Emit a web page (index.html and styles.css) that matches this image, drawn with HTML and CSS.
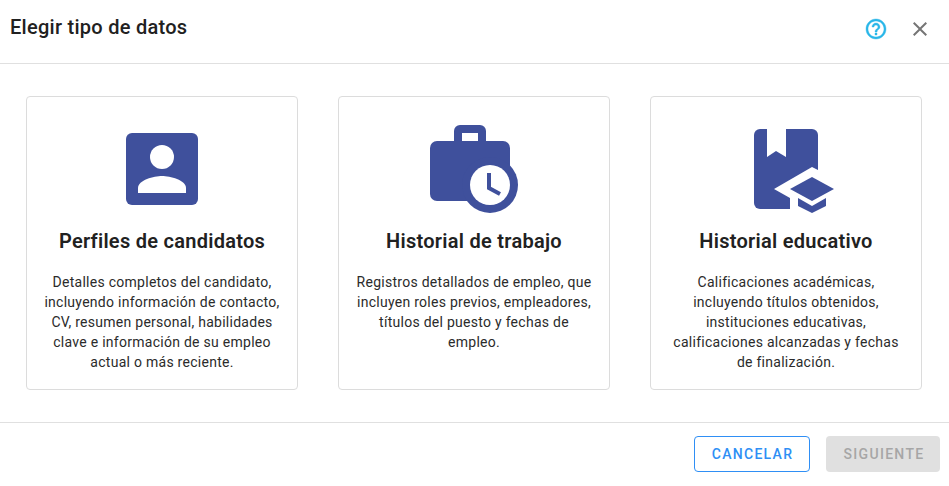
FILE: index.html
```html
<!DOCTYPE html>
<html>
<head>
	<meta charset="utf-8">
	<meta name="viewport" content="width=device-width, initial-scale=1">
	<title>Elegir tipo de datos</title>
	<link rel="stylesheet" href="styles.css">
</head>
<body>

	<header class="cabecera">
		<h1 class="titulo">Elegir tipo de datos</h1>
		<div class="acciones">
			<svg class="icono-ayuda" width="24" height="24" viewBox="0 0 24 24">
				<path fill="currentColor" stroke="currentColor" stroke-width="0.4" d="M11 18h2v-2h-2v2zm1-16C6.48 2 2 6.48 2 12s4.48 10 10 10 10-4.48 10-10S17.52 2 12 2zm0 18c-4.41 0-8-3.59-8-8s3.59-8 8-8 8 3.59 8 8-3.59 8-8 8zm0-14c-2.21 0-4 1.79-4 4h2c0-1.1.9-2 2-2s2 .9 2 2c0 2-3 1.75-3 5h2c0-2.25 3-2.5 3-5 0-2.21-1.79-4-4-4z"/>
			</svg>
			<svg class="icono-cerrar" width="24" height="24" viewBox="0 0 24 24">
				<path fill="currentColor" d="M19 6.41 17.59 5 12 10.59 6.41 5 5 6.41 10.59 12 5 17.59 6.41 19 12 13.41 17.59 19 19 17.59 13.41 12z"/>
			</svg>
		</div>
	</header>

	<main class="contenedor">
		<div class="tarjeta">
			<svg class="icono-tarjeta" width="100" height="88" viewBox="0 0 100 88">
				<path fill="#3f509c" d="M20 5h60a6 6 0 0 1 6 6v60a6 6 0 0 1-6 6H20a6 6 0 0 1-6-6V11a6 6 0 0 1 6-6z"/>
				<circle cx="50" cy="29" r="12" fill="#fff"/>
				<path fill="#fff" d="M26 65v-5c0-8 16-12 24-12s24 4 24 12v5z"/>
			</svg>
			<h2 class="nombre">Perfiles de candidatos</h2>
			<p class="detalle">Detalles completos del candidato, incluyendo información de contacto, CV, resumen personal, habilidades clave e información de su empleo actual o más reciente.</p>
		</div>
		<div class="tarjeta">
			<svg class="icono-tarjeta" width="100" height="88" viewBox="0 0 100 88">
				<path fill="#3f509c" fill-rule="evenodd" d="M30 14V3a6 6 0 0 1 6-6h20a6 6 0 0 1 6 6v11zm8-9v9h16V5z"/>
				<rect x="6" y="13" width="80" height="60" rx="7" fill="#3f509c"/>
				<circle cx="66" cy="57" r="28" fill="#3f509c"/>
				<circle cx="66" cy="57" r="20" fill="#fff"/>
				<path fill="none" stroke="#3f509c" stroke-width="4" d="M65 45v15l11 6"/>
			</svg>
			<h2 class="nombre">Historial de trabajo</h2>
			<p class="detalle">Registros detallados de empleo, que incluyen roles previos, empleadores, títulos del puesto y fechas de empleo.</p>
		</div>
		<div class="tarjeta">
			<svg class="icono-tarjeta" width="100" height="88" viewBox="0 0 100 88">
				<path fill="#3f509c" d="M24 1h52a6 6 0 0 1 6 6v74H24a6 6 0 0 1-6-6V7a6 6 0 0 1 6-6z"/>
				<path fill="#fff" d="M31 1h19v28l-10-6-9 6z"/>
				<path fill="#fff" d="M82 42 76 39 38 61 54 70V88h46V42z"/>
				<path fill="#3f509c" d="M76 49l22 12-22 12-22-12z"/>
				<path fill="#3f509c" d="M62 70l14 8 14-8v8l-14 7-14-7z"/>
			</svg>
			<h2 class="nombre">Historial educativo</h2>
			<p class="detalle">Calificaciones académicas, incluyendo títulos obtenidos, instituciones educativas, calificaciones alcanzadas y fechas de finalización.</p>
		</div>
	</main>

	<footer class="pie">
		<button class="boton cancelar">Cancelar</button>
		<button class="boton siguiente" disabled>Siguiente</button>
	</footer>

</body>
</html>
```

FILE: styles.css
```css
body{
	margin: 0;
	background: #fff;
	font-family: 'Roboto', sans-serif;
	color: #212121;
}

/*--------Cabecera-----------*/
.cabecera{
	height: 63px;
	border-bottom: 1px solid #e0e0e0;
	display: flex;
	justify-content: space-between;
	padding: 0 17px 0 10px;
}
.titulo{
	margin: 15px 0 0 0;
	font-size: 20px;
	line-height: 24px;
	font-weight: 500;
	letter-spacing: 0.27px;
}
.acciones{
	display: flex;
	gap: 20px;
	padding-top: 17px;
}
.icono-ayuda{
	color: #29b6e8;
}
.icono-cerrar{
	color: #757575;
}

/*--------Tarjetas-----------*/
.contenedor{
	display: flex;
	gap: 40px;
	padding: 32px 27px 32px 26px;
}
.tarjeta{
	width: 272px;
	height: 294px;
	box-sizing: border-box;
	border: 1px solid #dcdcdc;
	border-radius: 4px;
	padding: 31px 14px 0 14px;
	text-align: center;
	display: flex;
	flex-direction: column;
	align-items: center;
}
.icono-tarjeta{
	flex-shrink: 0;
	overflow: visible;
}
.nombre{
	margin: 12px 0 0 0;
	font-size: 20px;
	line-height: 26px;
	font-weight: 600;
	letter-spacing: 0.27px;
}
.detalle{
	margin: 18px 0 0 0;
	font-size: 14px;
	line-height: 20.1px;
	letter-spacing: 0.27px;
	color: #2b2b2b;
}

/*--------Pie-----------*/
.pie{
	border-top: 1px solid #e0e0e0;
	display: flex;
	justify-content: flex-end;
	gap: 16px;
	padding: 13px 9px 0 0;
}
.boton{
	height: 36px;
	border-radius: 4px;
	font-family: 'Roboto', sans-serif;
	font-size: 14px;
	font-weight: 500;
	letter-spacing: 1.3px;
	text-transform: uppercase;
}
.cancelar{
	width: 116px;
	padding: 0 0 0 1px;
	background: #fff;
	border: 1px solid #2f8ff5;
	color: #2f8ff5;
}
.siguiente{
	width: 114px;
	padding: 0 0 0 2px;
	background: #e0e0e0;
	border: none;
	color: #a6a6a6;
}
```
